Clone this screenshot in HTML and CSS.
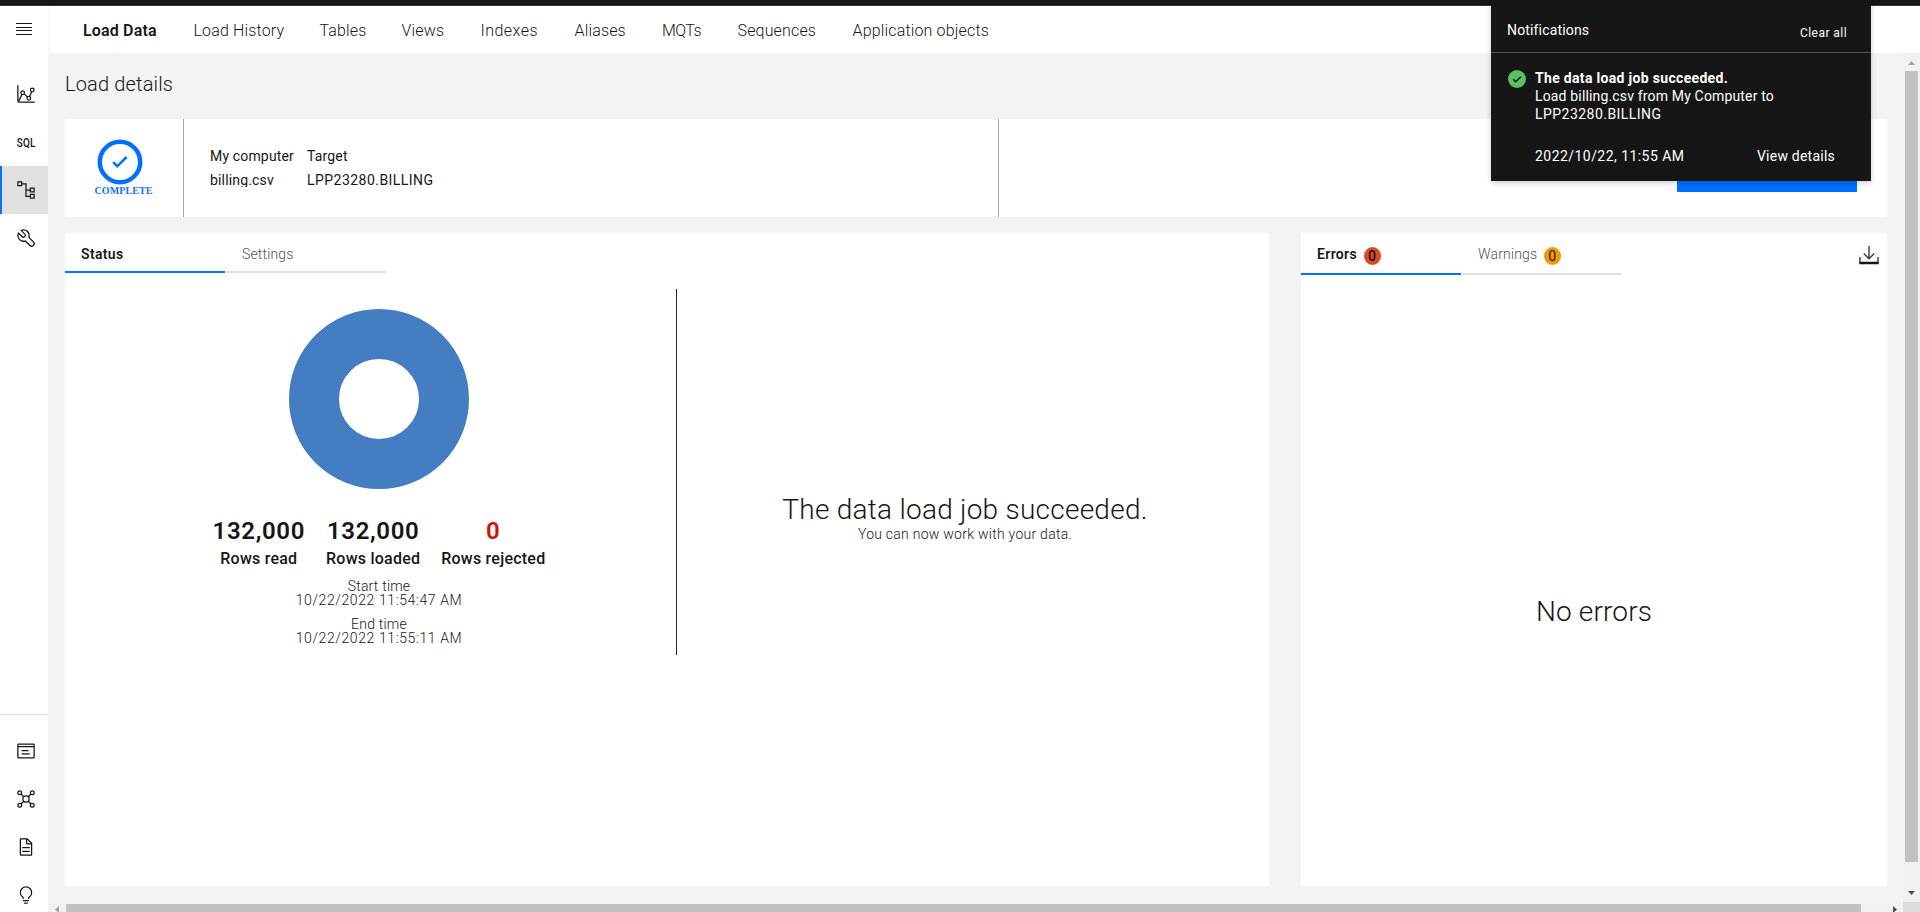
FILE: index.html
```html
<!DOCTYPE html>
<html lang="en">
<head>
<meta charset="utf-8">
<title>Load details</title>
<link rel="stylesheet" href="styles.css">
</head>
<body>
<div class="topbar"></div>
<div class="shell">
  <aside class="sidebar">
    <button class="menu-btn" aria-label="Menu"><span></span><span></span><span></span><span></span></button>
    <nav class="side-group">
      <a class="side-item"><svg class="icon" viewBox="0 0 32 32"><path d="M3 2v25a2 2 0 0 0 2 2h25M4.500 27 9.600 16.600M13 15.800l5.500 5.200M21.500 20.300 25 12.400"/><circle cx="10.600" cy="14" r="2.900"/><circle cx="20.500" cy="22.800" r="2.900"/><circle cx="26" cy="9.600" r="2.900"/></svg></a>
      <a class="side-item"><span class="sql">SQL</span></a>
      <a class="side-item active"><svg class="icon" viewBox="0 0 32 32"><path d="M3 3h6v6H3zM23 13h6v6h-6zM23 23h6v6h-6zM9 6h7v20h7M16 16h7"/></svg></a>
      <a class="side-item"><svg class="icon solid" viewBox="0 0 32 32"><path d="M12.100 2A9.800 9.800 0 0 0 6.700 3.600L13.100 10a2.100 2.100 0 0 1 .2 3 2.100 2.100 0 0 1-3-.2L3.700 6.400A9.840 9.840 0 0 0 2 12.100 10.140 10.140 0 0 0 12.100 22.200a10.900 10.900 0 0 0 2.600-.3l6.700 6.700a5 5 0 0 0 7.100-7.100l-6.700-6.700a10.900 10.900 0 0 0 .3-2.600A10 10 0 0 0 12.100 2Zm8 10.100a7.610 7.610 0 0 1-.3 2.100l-.3 1.100.8.8 6.700 6.700a2.880 2.880 0 0 1 .9 2.100A2.720 2.720 0 0 1 27 27a2.900 2.900 0 0 1-4.200 0l-6.700-6.700-.8-.8-1.100.3a7.610 7.610 0 0 1-2.100.3 8.270 8.270 0 0 1-5.700-2.300A7.630 7.630 0 0 1 4 12.100a8.330 8.330 0 0 1 .3-2.200l4.400 4.400a4.140 4.140 0 0 0 5.900.2 4.140 4.140 0 0 0-.2-5.900L10 4.200a6.450 6.450 0 0 1 2-.3 8.270 8.270 0 0 1 5.700 2.300A8.490 8.490 0 0 1 20.100 12.100Z"/></svg></a>
    </nav>
    <nav class="side-group bottom">
      <a class="side-item"><svg class="icon" viewBox="0 0 32 32"><path d="M4 5h24a1 1 0 0 1 1 1v20a1 1 0 0 1-1 1H4a1 1 0 0 1-1-1V6a1 1 0 0 1 1-1zM3 9h26M9 15.500h11M9 20.500h13"/></svg></a>
      <a class="side-item"><svg class="icon" viewBox="0 0 32 32"><circle cx="16" cy="16" r="5"/><circle cx="6" cy="6" r="3"/><circle cx="26" cy="6" r="3"/><circle cx="6" cy="26" r="3"/><circle cx="26" cy="26" r="3"/><path d="m8 8 4.500 4.500M24 8l-4.500 4.500M8 24l4.500-4.500M24 24l-4.500-4.500"/></svg></a>
      <a class="side-item"><svg class="icon solid" viewBox="0 0 32 32"><path d="M25.700 9.300l-7-7c-.2-.2-.4-.3-.7-.3H8c-1.100 0-2 .9-2 2v24c0 1.100.9 2 2 2h16c1.100 0 2-.9 2-2V10c0-.3-.1-.5-.3-.7zM18 4.400l5.600 5.600H18V4.400zM24 28H8V4h8v6c0 1.100.9 2 2 2h6v16zM10 22h12v2H10zM10 16h12v2H10z"/></svg></a>
      <a class="side-item"><svg class="icon solid" viewBox="0 0 32 32"><path d="M11 24h10v2H11zM13 28h6v2h-6zM16 2A10 10 0 0 0 6 12a9.190 9.190 0 0 0 3.460 7.620c1 .93 1.540 1.460 1.540 2.380h2c0-1.840-1.110-2.870-2.190-3.860A7.200 7.200 0 0 1 8 12a8 8 0 0 1 16 0 7.200 7.200 0 0 1-2.820 6.140c-1.070 1-2.180 2-2.180 3.860h2c0-.92.530-1.450 1.540-2.390A9.180 9.180 0 0 0 26 12 10 10 0 0 0 16 2z"/></svg></a>
    </nav>
  </aside>
  <div class="content">
    <header class="header">
      <nav class="nav">
        <a class="current">Load Data</a><a>Load History</a><a>Tables</a><a>Views</a><a class="wide">Indexes</a><a>Aliases</a><a class="tight">MQTs</a><a>Sequences</a><a>Application objects</a>
      </nav>
    </header>
    <div class="viewport">
      <main class="page">
        <h1 class="title">Load details</h1>
        <section class="summary">
          <div class="state">
            <svg class="ring" viewBox="0 0 46 46"><circle cx="23" cy="23" r="20.200"/><path d="m16.200 23.200 4.100 4.100 9.300-9.300"/></svg>
            <div class="state-label">COMPLETE</div>
          </div>
          <div class="route">
            <div>My computer</div><div>Target</div>
            <div class="file">billing.csv</div><div class="code">LPP23280.BILLING</div>
          </div>
          <div class="action"><button class="primary" aria-label="Primary action"></button></div>
        </section>
        <section class="panels">
          <div class="panel">
            <div class="tabs"><a class="tab selected">Status</a><a class="tab">Settings</a></div>
            <div class="status">
              <div class="stats">
                <svg class="donut" viewBox="0 0 180 180"><circle cx="90" cy="90" r="65"/></svg>
                <div class="counts">
                  <div><b>132,000</b><span>Rows read</span></div>
                  <div><b>132,000</b><span>Rows loaded</span></div>
                  <div><b class="bad">0</b><span>Rows rejected</span></div>
                </div>
                <div class="time"><div>Start time</div><div class="stamp">10/22/2022 11:54:47 AM</div></div>
                <div class="time"><div>End time</div><div class="stamp">10/22/2022 11:55:11 AM</div></div>
              </div>
              <div class="outcome"><h2>The data load job succeeded.</h2><p>You can now work with your data.</p></div>
            </div>
          </div>
          <div class="panel">
            <div class="tabs tall"><a class="tab selected">Errors<i class="badge red">0</i></a><a class="tab">Warnings<i class="badge amber">0</i></a>
              <svg class="download" viewBox="0 0 20 19"><path d="M10 0v12.500M4.800 7.600 10 12.800l5.200-5.200M1 11v6M19 11v6"/><path class="base" d="M.3 17h19.400"/></svg></div>
            <div class="empty">No errors</div>
          </div>
        </section>
      </main>
      <div class="vscroll"><svg viewBox="0 0 7 4"><path d="M0 4h7L3.500 0z"/></svg><div class="vthumb"></div><svg class="dark" viewBox="0 0 7 4"><path d="M0 0h7L3.500 4z"/></svg></div>
      <div class="hscroll"><svg viewBox="0 0 4 7"><path d="M4 0v7L0 3.500z"/></svg><div class="hthumb"></div><svg class="dark" viewBox="0 0 4 7"><path d="M0 0v7l4-3.500z"/></svg></div>
      <div class="corner"></div>
    </div>
  </div>
</div>
<section class="notice">
  <div class="notice-head"><span>Notifications</span><a class="clear">Clear all</a></div>
  <div class="notice-body">
    <svg class="ok" viewBox="0 0 18 18"><circle cx="9" cy="9" r="9"/><path d="m5.200 9.200 2.600 2.600 5-5"/></svg>
    <div class="notice-text">
      <strong>The data load job succeeded.</strong>
      <p>Load billing.csv from My Computer to<br><span class="code">LPP23280.BILLING</span></p>
      <div class="notice-foot"><span class="when">2022/10/22, 11:55 AM</span><a>View details</a></div>
    </div>
  </div>
</section>
</body>
</html>
```
FILE: styles.css
```css
* { box-sizing: border-box; margin: 0; padding: 0; }
body { width: 1920px; height: 912px; overflow: hidden; position: relative; font: 400 14px/18px Roboto, "Open Sans", sans-serif; letter-spacing: .16px; color: #161616; background: #f3f3f3; white-space: nowrap; }
button { border: 0; background: none; font: inherit; }
.topbar { height: 6px; background: #161616; border-bottom: 1px solid #393235; }
.shell { display: flex; height: 906px; }

.sidebar { width: 49px; flex: none; display: flex; flex-direction: column; background: #fff; border-right: 1px solid #f3f3f3; overflow: hidden; }
.menu-btn { height: 64px; flex: none; padding: 17px 16px 35px; display: flex; flex-direction: column; justify-content: space-between; }
.menu-btn span { height: 1px; width: 16px; background: #161616; }
.side-group { display: flex; flex-direction: column; }
.side-group.bottom { margin-top: 452px; border-top: 1px solid #e0e0e0; padding-top: 12px; height: 240px; flex: none; }
.side-item { height: 48px; flex: none; padding: 0 12px 0 13px; border-left: 3px solid transparent; display: flex; align-items: center; }
.side-item.active { background: #e0e0e0; border-left: 2px solid #0f6fff; padding-left: 14px; }
.icon { width: 20px; height: 20px; flex: none; fill: none; stroke: #161616; stroke-width: 2; }
.icon.solid { fill: #161616; stroke: none; }
.sql { font-size: 13px; line-height: 13px; font-weight: 500; letter-spacing: .3px; transform: scaleX(.76); transform-origin: 0 50%; padding-left: 1px; }

.content { flex: 1; display: flex; flex-direction: column; }
.header { height: 47px; background: #fff; padding: 13px 0 0 34px; }
.nav { display: grid; grid-template-columns: 110.5px 126px 82px 79px 94px 87.500px 75.500px 115px auto; font-size: 16px; line-height: 24px; font-weight: 350; }
.nav .current { font-weight: 600; }
.nav .wide { letter-spacing: .46px; }
.nav .tight { letter-spacing: -.5px; }

.viewport { height: 859px; display: grid; grid-template-columns: 1854px 17px; grid-template-rows: 849px 10px; }
.page { padding: 17px 16px 16px; }
.title { font-size: 20px; line-height: 28px; font-weight: 350; margin-bottom: 21px; }

.summary { height: 98px; background: #fff; display: flex; }
.state { width: 119px; border-right: 1px solid #a8a8a8; padding-top: 20px; display: flex; flex-direction: column; align-items: center; }
.ring { width: 46px; height: 46px; margin-right: 8px; fill: none; stroke: #0070ff; stroke-width: 4.500; }
.ring path { stroke-width: 2.500; }
.state-label { font: 700 10px/12px "Liberation Serif", serif; letter-spacing: .1px; margin-right: 1px; color: #0f6fff; }
.route { width: 815px; border-right: 1px solid #a8a8a8; padding: 25px 0 0 26px; display: grid; grid-template-columns: 97px auto; grid-template-rows: 24px 19px; line-height: 24px; }
.file { overflow: hidden; }
.code { letter-spacing: .46px; }
.action { flex: 1; padding: 25px 30px 0 0; display: flex; justify-content: flex-end; }
.primary { width: 180px; height: 48px; background: #0070ff; }

.panels { display: flex; gap: 32px; margin-top: 16px; }
.panel { width: 586px; height: 653px; background: #fff; }
.panel:first-child { width: 1204px; }
.tabs { height: 40px; display: flex; gap: 1px; }
.tabs.tall { height: 42px; }
.tab { width: 160px; padding: 12px 0 0 16px; border-bottom: 2px solid #e0e0e0; color: #525252; display: flex; font-weight: 350; }
.tab.selected { color: #161616; font-weight: 600; border-color: #0070ff; letter-spacing: .35px; }
.badge { width: 17px; height: 18px; border-radius: 50%; margin: 2px 0 0 6.500px; text-align: center; font-style: normal; font-weight: 400; color: #161616; letter-spacing: 0; }
.red { background: #de472a; font-weight: 500; }
.amber { background: #f09a00; }
.download { width: 20px; height: 19px; margin: 13px 8px 0 auto; fill: none; stroke: #393939; stroke-width: 1.400; }
.download .base { stroke: #161616; stroke-width: 2.500; }
.empty { padding-top: 319px; text-align: center; font-size: 28px; line-height: 36px; font-weight: 350; }

.status { margin-top: 16px; display: flex; height: 366px; }
.stats { width: 611px; padding: 20px 0 0 17px; display: flex; flex-direction: column; align-items: center; }
.donut { width: 180px; height: 180px; fill: none; stroke: #447dc1; stroke-width: 50; }
.counts { display: flex; gap: 21px; margin: 26px 0 0; text-align: center; font-size: 16px; font-weight: 500; letter-spacing: .23px; }
.counts b { display: block; font-size: 24px; line-height: 32px; font-weight: 600; letter-spacing: .65px; }
.counts span { display: block; line-height: 21px; padding-top: 1px; }
.counts .bad { color: #d50f0a; }
.time { margin-top: 10px; text-align: center; font-weight: 350; line-height: 14px; letter-spacing: .2px; }
.stamp { letter-spacing: .6px; }
.outcome { flex: 1; border-left: 1px solid #262626; padding: 204px 16px 0 0; text-align: center; font-weight: 350; }
.outcome h2 { font-size: 28px; line-height: 34px; font-weight: 350; letter-spacing: .25px; }
.outcome p { line-height: 16px; margin-top: -1px; letter-spacing: .26px; }

.vscroll { background: #f1f1f1; display: flex; flex-direction: column; align-items: center; padding-top: 8px; }
.vscroll svg { width: 7px; height: 4px; flex: none; fill: #a3a3a3; }
.vscroll .dark, .hscroll .dark { fill: #505050; }
.vthumb { width: 13px; height: 791px; margin: 6px 0 29px; background: #c1c1c1; flex: none; }
.hscroll { background: #f1f1f1; display: flex; padding: 2px 0 0 6px; overflow: hidden; }
.hscroll svg { width: 4px; height: 7px; flex: none; margin-top: 2px; fill: #a3a3a3; }
.hthumb { width: 1795px; height: 13px; margin: 0 32px 0 7px; background: #c1c1c1; flex: none; }
.corner { background: #dcdcdc; }

.notice { position: absolute; left: 1491px; top: 0; width: 380px; height: 181px; background: #161616; color: #fff; box-shadow: 0 2px 6px rgba(0, 0, 0, .2); }
.notice-head { height: 53px; border-bottom: 1px solid #525252; padding: 20px 24px 0 16px; display: flex; justify-content: space-between; line-height: 20px; }
.clear { font-size: 12px; padding-top: 3px; letter-spacing: .44px; }
.notice-body { display: flex; padding: 16px 36px 0 17px; }
.ok { width: 18px; height: 18px; margin: 1px 9px 0 0; fill: #5bbf63; flex: none; }
.ok path { fill: none; stroke: #161616; stroke-width: 1.500; }
.notice-text { flex: 1; }
.notice-text strong { display: block; letter-spacing: .32px; }
.notice-foot { display: flex; justify-content: space-between; margin-top: 24px; letter-spacing: .23px; }
.when { letter-spacing: .45px; }
```
